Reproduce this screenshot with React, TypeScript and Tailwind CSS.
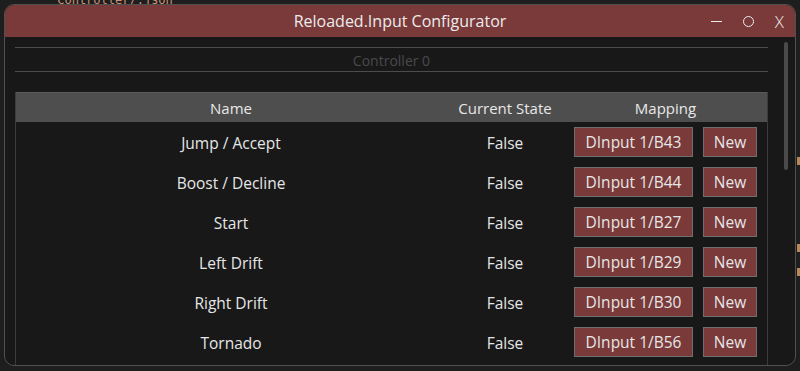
import React from "react";

const rows = [
  { name: "Jump / Accept", state: "False", map: "DInput 1/B43" },
  { name: "Boost / Decline", state: "False", map: "DInput 1/B44" },
  { name: "Start", state: "False", map: "DInput 1/B27" },
  { name: "Left Drift", state: "False", map: "DInput 1/B29" },
  { name: "Right Drift", state: "False", map: "DInput 1/B30" },
  { name: "Tornado", state: "False", map: "DInput 1/B56" },
];

export default function App() {
  return (
    <div
      className="relative w-[800px] h-[371px] overflow-hidden bg-[#1e1e1e]"
      style={{ fontFamily: '"Open Sans", "Noto Sans", sans-serif' }}
    >
      {/* editor text behind the window */}
      <div
        className="absolute left-[50px] top-[-6px] text-[12px] leading-[12px] text-[#ce9178]"
        style={{ fontFamily: '"DejaVu Sans Mono", monospace' }}
      >
        "Controller/.json"
      </div>
      <div className="absolute left-[797px] top-[157px] w-[3px] h-[8px] bg-[#b5895a]" />
      <div className="absolute left-[797px] top-[244px] w-[3px] h-[8px] bg-[#b5895a]" />
      <div className="absolute left-[797px] top-[268px] w-[3px] h-[8px] bg-[#b5895a]" />

      {/* window */}
      <div className="absolute left-[4px] top-[4px] w-[792px] h-[362px] rounded-[10px] border border-[#505050] bg-[#181818] overflow-hidden flex flex-col">
        <div className="h-[32px] shrink-0 bg-[#7a3a3a] grid grid-cols-[1fr_auto_1fr] items-center text-[#ececec]">
          <div />
          <div className="text-[16px] leading-none pb-[1px]">Reloaded.Input Configurator</div>
          <div className="flex justify-end items-center leading-none pr-[11px] gap-[21px]">
            <span className="block w-[11px] h-[1.5px] bg-[#ececec] mt-[1px]" />
            <span className="block w-[11px] h-[11px] rounded-full border-[1.5px] border-[#ececec]" />
            <span className="text-[17px] font-light">X</span>
          </div>
        </div>

        <div className="flex-1 flex min-h-0">
          <div className="w-[753px] ml-[10px] flex flex-col pt-[10px]">
            <div className="h-[25px] border-y border-[#4c4c4c] flex items-center justify-center text-[14px] text-[#4a4a4a] pt-[2px]">
              Controller 0
            </div>
            <div className="mt-[20px] flex-1 border-x border-[#3c3c3c] flex flex-col">
              <div className="h-[30px] shrink-0 bg-[#4e4e4e] border-t border-[#5a5a5a] grid grid-cols-[430px_118px_1fr] items-center text-[15px] text-[#e8e8e8] pt-[2px]">
                <div className="text-center">Name</div>
                <div className="text-center">Current State</div>
                <div className="text-center">Mapping</div>
              </div>
              {rows.map((r) => (
                <div
                  key={r.name}
                  className="h-[40px] shrink-0 grid grid-cols-[430px_118px_1fr] items-center text-[15.5px] text-[#e6e6e6]"
                >
                  <div className="text-center pt-[4px]">{r.name}</div>
                  <div className="text-center pt-[4px]">{r.state}</div>
                  <div className="flex items-center pl-[10px] gap-[10px]">
                    <div className="w-[119px] h-[30px] bg-[#7a3a3a] border border-[#6e6e6e] flex items-center justify-center pt-[2px]">
                      {r.map}
                    </div>
                    <div className="w-[54px] h-[30px] bg-[#7a3a3a] border border-[#6e6e6e] flex items-center justify-center pt-[2px]">
                      New
                    </div>
                  </div>
                </div>
              ))}
            </div>
          </div>
          <div className="flex-1 pl-[16px] pt-[5px]">
            <div className="w-[4px] h-[128px] rounded-full bg-[#4a4a4a]" />
          </div>
        </div>
      </div>
    </div>
  );
}
